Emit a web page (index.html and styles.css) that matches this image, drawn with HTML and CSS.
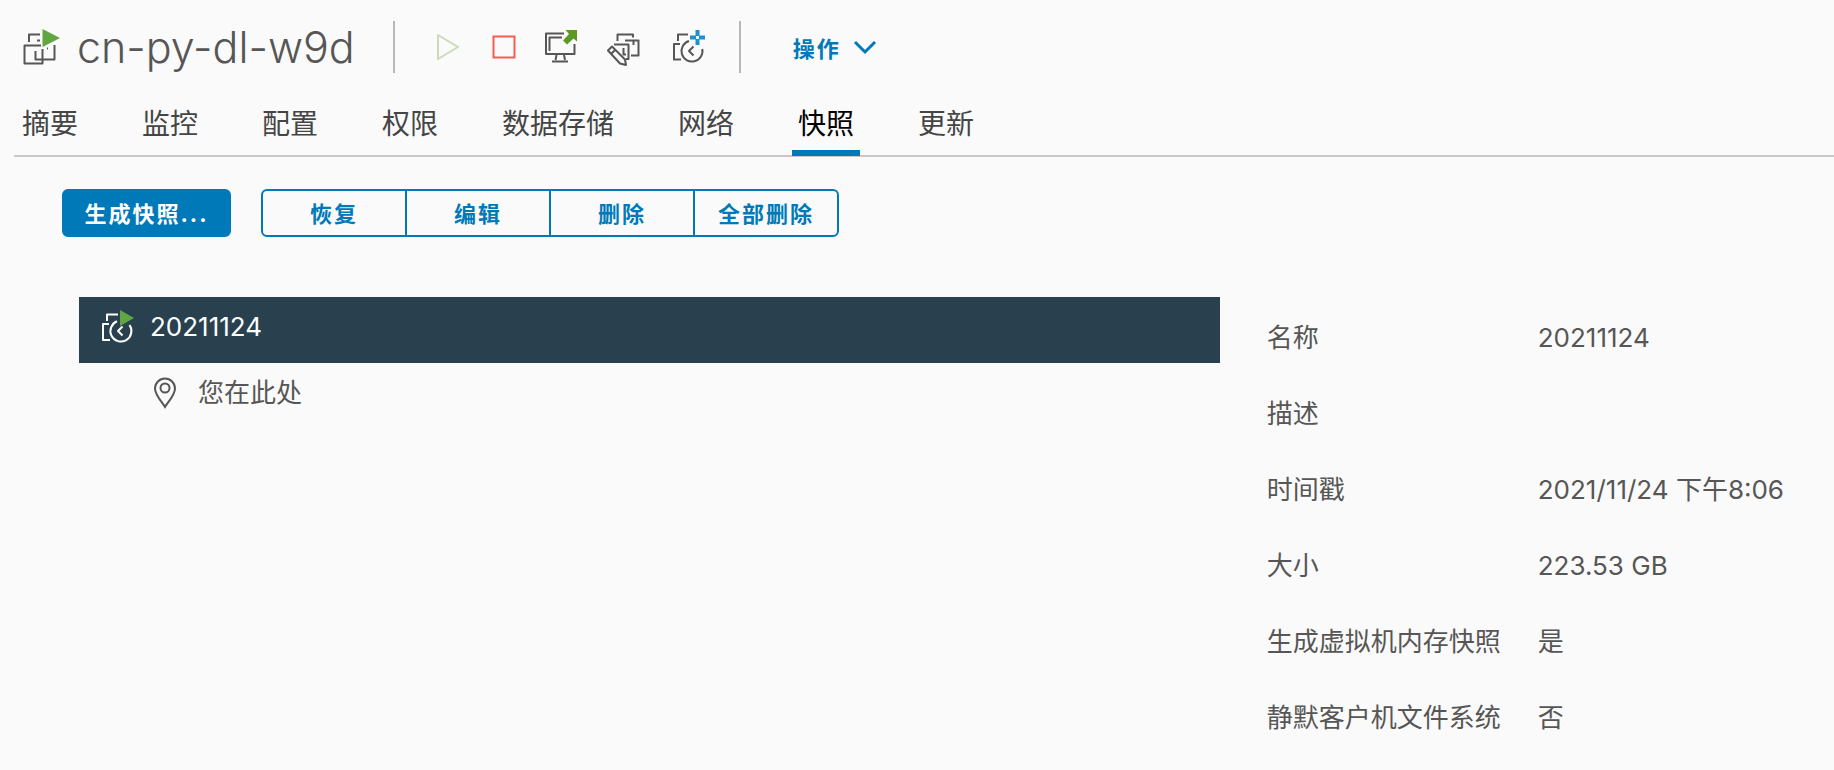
FILE: index.html
```html
<!DOCTYPE html>
<html lang="zh-CN">
    <head>
        <meta charset="utf-8">
        <title>cn-py-dl-w9d</title>
        <link rel="stylesheet" href="styles.css">
    </head>
    <body>
        <header class="object-header">
            <svg class="icon" viewBox="0 0 40 40">
                <path d="M7 15V7.500H18M15 13.500H18M11 18.500H2.500V36.500H20.500V29M11 18.500H19M13.500 24V32.500H32.500V18M20.500 22V29M25 21.500H26"/>
                <path class="green" d="M20.500 2L38 11L20.500 20Z"/>
            </svg>
            <h1>cn-py-dl-w9d</h1>
            <div class="quick-actions">
                <button aria-label="打开电源" disabled>
                    <svg class="icon play" viewBox="0 0 40 40"><path d="M17 8L37 20L17 32Z"/></svg>
                </button>
                <button aria-label="关闭电源">
                    <svg class="icon stop" viewBox="0 0 40 40"><path d="M10.500 9.500H31.500V30.500H10.500Z"/></svg>
                </button>
                <button aria-label="启动控制台">
                    <svg class="icon" viewBox="0 0 40 40">
                        <path d="M19 6.500H1V27H29.500V17M17 10.500H4.500V24M11.500 28L10.500 33M19 28L20 33M7 34.500H23"/>
                        <path class="green-dark" d="M20.500 3H32V14.500L28.500 11.500L22 17.500L18 13.500L24 7Z"/>
                    </svg>
                </button>
                <button aria-label="编辑设置">
                    <svg class="icon" viewBox="0 0 40 40">
                        <path d="M10.500 14V7.500H26V10.500M7 17.500H21.500V32H19M16.500 21V27.500H19M24 28.500H31.500V13.500H18M26.500 14V18"/>
                        <path d="M1 23.500L5 19.500L18 32.500L19 38L13 36.500ZM4 27L8.500 22.500"/>
                    </svg>
                </button>
                <button aria-label="生成快照">
                    <svg class="icon" viewBox="0 0 40 40">
                        <path d="M9 14V7.500H19M11 17H5V32.500H12M20 14A10.500 10.500 0 1 0 33.300 22M24.500 19.500L20 24L24.500 28.500"/>
                        <path class="plus" d="M28.500 3V9M28.500 12V18M21 10.500H27M30 10.500H36"/>
                    </svg>
                </button>
            </div>
            <button class="actions-menu">操作
                <svg viewBox="0 0 24 16"><path d="M2 3L12 13L22 3"/></svg>
            </button>
        </header>

        <nav class="tabs">
            <a href="#">摘要</a>
            <a href="#">监控</a>
            <a href="#">配置</a>
            <a href="#">权限</a>
            <a href="#">数据存储</a>
            <a href="#">网络</a>
            <a href="#" class="active">快照</a>
            <a href="#">更新</a>
        </nav>

        <div class="toolbar">
            <button class="btn btn-primary">生成快照...</button>
            <div class="btn-group">
                <button class="btn">恢复</button>
                <button class="btn">编辑</button>
                <button class="btn">删除</button>
                <button class="btn">全部删除</button>
            </div>
        </div>

        <main class="content">
            <div class="tree">
                <div class="node selected">
                    <svg class="icon" viewBox="0 0 40 40">
                        <path d="M9 14V7.500H20M11 17H5V33H12M19 14.300A10.500 10.500 0 1 0 31.500 18M24.500 19.500L20 24L24.500 28.500"/>
                        <path class="green" d="M22 3L36 11L22 19Z"/>
                    </svg>
                    <span>20211124</span>
                </div>
                <div class="node child">
                    <svg class="pin" viewBox="0 0 24 32">
                        <path d="M12 30C9 25 2 18 2 11.500A10 10 0 0 1 22 11.500C22 18 15 25 12 30Z"/>
                        <circle cx="12" cy="11" r="4.500"/>
                    </svg>
                    <span>您在此处</span>
                </div>
            </div>
            <dl class="details">
                <dt>名称</dt>
                <dd>20211124</dd>
                <dt>描述</dt>
                <dd></dd>
                <dt>时间戳</dt>
                <dd>2021/11/24 下午8:06</dd>
                <dt>大小</dt>
                <dd>223.53 GB</dd>
                <dt>生成虚拟机内存快照</dt>
                <dd>是</dd>
                <dt>静默客户机文件系统</dt>
                <dd>否</dd>
            </dl>
        </main>
    </body>
</html>
```
FILE: styles.css
```css
* {
    box-sizing: border-box;
}
body {
    margin: 0;
    background-color: #fafafa;
    color: #565656;
    font-family: Inter, "Noto Sans CJK SC", sans-serif;
    font-size: 26px;
    line-height: 40px;
}
button {
    font-family: inherit;
    cursor: pointer;
    border: none;
    background-color: transparent;
    padding: 0;
}
svg {
    display: block;
    flex: none;
    fill: none;
    stroke: currentColor;
    stroke-width: 2;
}

/* icons */
.icon {
    width: 40px;
    height: 40px;
    overflow: visible;
    stroke-linejoin: round;
}
.icon .green {
    fill: #60a744;
    stroke: none;
}
.icon .green-dark {
    fill: #5a9a23;
    stroke: none;
}
.icon .plus {
    stroke: #1a91d0;
    stroke-width: 4;
}
.play {
    stroke: #ccdab9;
}
.stop {
    stroke: #f3604f;
    stroke-linejoin: miter;
}
.pin {
    width: 24px;
    height: 32px;
}

/* header */
.object-header {
    display: flex;
    align-items: center;
    padding: 21px 22px 0;
}
.object-header h1 {
    margin: 0 38px 0 15px;
    font-size: 43px;
    font-weight: 300;
    line-height: 52px;
}
.quick-actions {
    display: flex;
    align-items: center;
    gap: 22px;
    height: 52px;
    padding: 0 30px 0 26px;
    border-left: 2px solid #b8b8b8;
    border-right: 2px solid #b8b8b8;
}
.quick-actions button {
    color: #565656;
}
.actions-menu {
    display: flex;
    align-items: center;
    gap: 12px;
    margin-left: 52px;
    color: #0079b8;
    font-size: 22px;
    font-weight: bold;
    letter-spacing: 2px;
}
.actions-menu svg {
    width: 24px;
    height: 16px;
    stroke-width: 3;
}

/* tabs */
.tabs {
    display: flex;
    gap: 52px;
    margin: 31px 0 0 14px;
    padding-left: 2px;
    border-bottom: 2px solid #c8c8c8;
}
.tabs a {
    padding: 0 6px 6px;
    margin-bottom: -1px;
    border-bottom: 6px solid transparent;
    color: #454545;
    font-size: 28px;
    text-decoration: none;
}
.tabs a.active {
    color: #000;
    border-bottom-color: #0079b8;
}

/* buttons */
.toolbar {
    display: flex;
    gap: 30px;
    padding: 32px 62px 0;
}
.btn {
    width: 146px;
    height: 48px;
    padding-bottom: 2px;
    border: 2px solid #0079b8;
    color: #0079b8;
    font-size: 22px;
    font-weight: bold;
    letter-spacing: 2px;
}
.btn-primary {
    width: 169px;
    border-radius: 6px;
    background-color: #0079b8;
    color: #fff;
}
.btn-group {
    display: flex;
}
.btn-group .btn + .btn {
    margin-left: -2px;
}
.btn-group .btn:first-child {
    border-radius: 6px 0 0 6px;
}
.btn-group .btn:last-child {
    border-radius: 0 6px 6px 0;
}

/* snapshot tree and details */
.content {
    display: grid;
    grid-template-columns: 13fr 7fr;
    padding: 60px 0 0 79px;
}
.node {
    display: flex;
    align-items: center;
    gap: 12px;
    padding: 10px 19px 16px;
}
.node.selected {
    background-color: #29414e;
    color: #fff;
}
.node.child {
    gap: 21px;
    padding-left: 74px;
}
.details {
    display: grid;
    grid-template-columns: 271px 1fr;
    grid-auto-rows: 76px;
    align-items: center;
    margin: 0;
    padding: 3px 0 0 47px;
}
.details dd {
    margin: 0;
}
```
